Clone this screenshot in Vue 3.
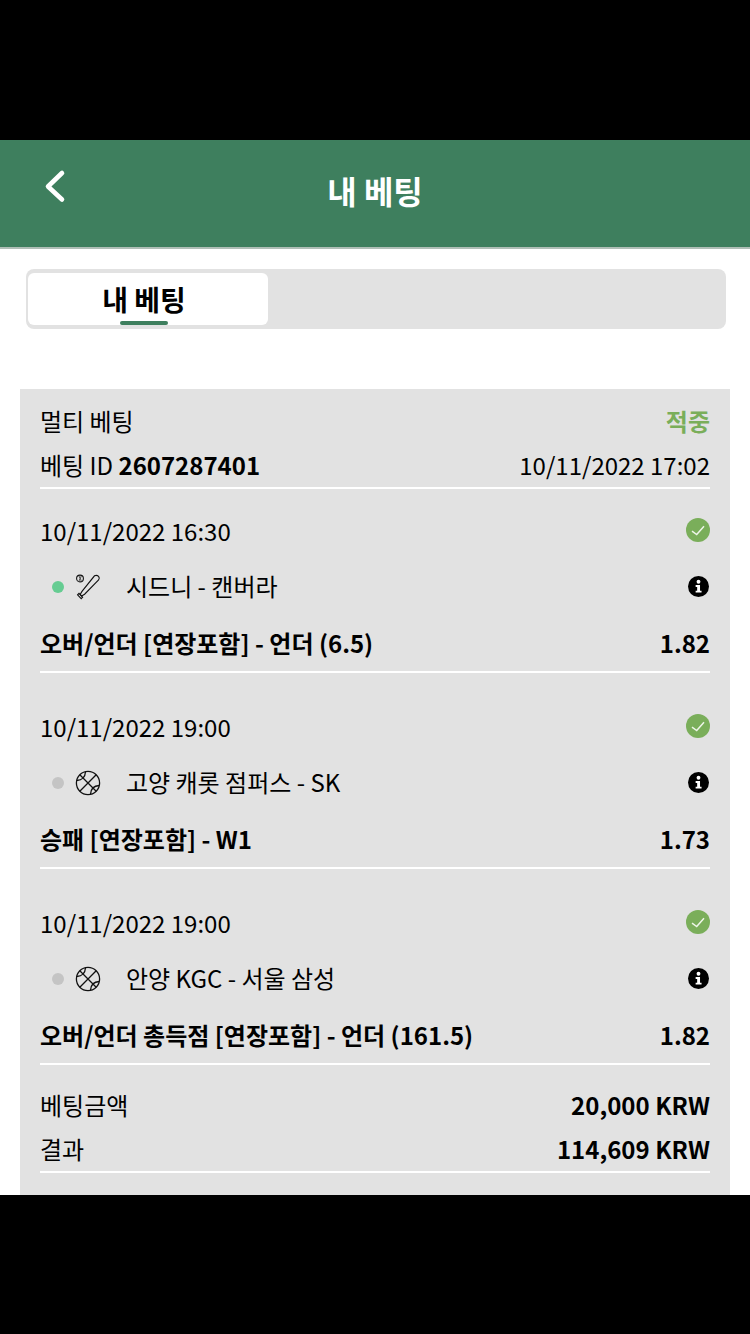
<script setup>
const bets = [
  { date: '10/11/2022 16:30', match: '시드니 - 캔버라', market: '오버/언더 [연장포함] - 언더 (6.5)', odds: '1.82', sport: 'baseball', live: true },
  { date: '10/11/2022 19:00', match: '고양 캐롯 점퍼스 - SK', market: '승패 [연장포함] - W1', odds: '1.73', sport: 'basketball', live: false },
  { date: '10/11/2022 19:00', match: '안양 KGC - 서울 삼성', market: '오버/언더 총득점 [연장포함] - 언더 (161.5)', odds: '1.82', sport: 'basketball', live: false },
]
</script>

<template>
  <div class="screen">
    <div class="band"></div>
    <main class="page">
      <header class="topbar">
        <button class="back" aria-label="뒤로">
          <svg width="28" height="40" viewBox="0 0 28 40" fill="none">
            <path d="M22 6 L8 19.5 L22 32.5" stroke="#fff" stroke-width="4.6" stroke-linecap="round" stroke-linejoin="round" />
          </svg>
        </button>
        <h1>내 베팅</h1>
      </header>

      <div class="tabs">
        <div class="tab">내 베팅<span class="underline"></span></div>
      </div>

      <section class="card">
        <div class="row head-row"><span>멀티 베팅</span><b class="won">적중</b></div>
        <div class="row head-row second"><span>베팅 ID <b>2607287401</b></span><span>10/11/2022 17:02</span></div>

        <div v-for="(bet, i) in bets" :key="i" class="bet">
          <div class="row date-row">
            <span>{{ bet.date }}</span>
            <svg class="check" width="24" height="24" viewBox="0 0 24 24">
              <circle cx="12" cy="12" r="12" fill="#7aae5a" />
              <path d="M6 13.2 L10.7 16.5 L18 8.2" fill="none" stroke="#eef5e8" stroke-width="1.5" />
            </svg>
          </div>
          <div class="row match-row">
            <span class="match">
              <i class="dot" :class="{ live: bet.live }"></i>
              <svg v-if="bet.sport === 'baseball'" class="sport" width="26" height="26" viewBox="0 0 26 26" fill="none" stroke="#111" stroke-width="1.1">
                <circle cx="5" cy="4.5" r="3.4" />
                <path d="M4 2 Q6 4.5 4 7 M6.2 2 Q4.6 4.5 6.2 7" stroke-width="0.7" />
                <path d="M19.5 1.8 Q21.8 0.8 23.6 2.4 Q25 4.2 23.6 6 L9.6 20.2 L6.6 22 L5.2 20.4 L7 17.4 Z" />
                <path d="M2.6 20.8 L6.2 24.6 L7.6 23.2 L4 19.4 Z" />
              </svg>
              <svg v-else class="sport" width="26" height="26" viewBox="0 0 26 26" fill="none" stroke="#111" stroke-width="1.3">
                <circle cx="13" cy="13" r="11.6" />
                <path d="M4.8 4.8 L21.2 21.2 M21.2 4.8 L4.8 21.2" />
                <path d="M1.8 10.5 Q10 10 10.5 1.8 M24.2 15.5 Q16 16 15.5 24.2" />
              </svg>
              <span class="match-name">{{ bet.match }}</span>
            </span>
            <svg class="info" width="21" height="21" viewBox="0 0 22 22">
              <circle cx="11" cy="11" r="11" fill="#000" />
              <circle cx="11" cy="6" r="2" fill="#fff" />
              <path d="M8 9.4 H12.6 V15.4 H14.2 V17.4 H8 V15.4 H9.6 V11.4 H8 Z" fill="#fff" />
            </svg>
          </div>
          <div class="row market-row"><b>{{ bet.market }}</b><b>{{ bet.odds }}</b></div>
        </div>

        <div class="row total first"><span>베팅금액</span><b>20,000 KRW</b></div>
        <div class="row total last"><span>결과</span><b>114,609 KRW</b></div>
      </section>
    </main>
    <div class="band bottom"></div>
  </div>
</template>

<style scoped>
.screen {
  width: 750px;
  height: 1334px;
  overflow: hidden;
  display: flex;
  flex-direction: column;
  background: #000;
  color: #000;
  font-family: "Noto Sans CJK KR", "Noto Sans", sans-serif;
  font-size: 24px;
}
.band { height: 140px; flex: none; background: #000; }
.band.bottom { flex: 1; }
.page {
  height: 1055px;
  flex: none;
  overflow: hidden;
  background: #fff;
}
.topbar {
  height: 107px;
  position: relative;
  display: flex;
  align-items: center;
  justify-content: center;
  background: #3e7f5e;
  border-bottom: 2px solid #b0bfb7;
}
.topbar h1 {
  margin: 0 0 8px;
  color: #fff;
  font-size: 32px;
  font-weight: 700;
  line-height: 44px;
}
.back {
  position: absolute;
  left: 40px;
  top: 27px;
  padding: 0;
  border: 0;
  background: none;
  display: flex;
}
.tabs {
  margin: 20px 24px 0 26px;
  height: 60px;
  box-sizing: border-box;
  padding: 4px 2px;
  background: #e2e2e2;
  border-radius: 8px;
}
.tab {
  position: relative;
  width: 240px;
  height: 52px;
  box-sizing: border-box;
  padding-right: 8px;
  background: #fff;
  border-radius: 6px;
  text-align: center;
  font-size: 28px;
  font-weight: 700;
  line-height: 52px;
}
.underline {
  position: absolute;
  left: 92px;
  bottom: 0;
  width: 48px;
  height: 4px;
  border-radius: 2px;
  background: #3e7f5e;
}
.card {
  margin: 60px 20px 0;
  padding: 9px 20px 0;
  height: 806px;
  box-sizing: border-box;
  background: #e2e2e2;
}
.row {
  display: flex;
  align-items: center;
  justify-content: space-between;
  white-space: nowrap;
}
.row b { font-weight: 700; }
.head-row { height: 44px; }
.head-row.second { padding-bottom: 1px; border-bottom: 2px solid #fff; }
.won { color: #7aae5a; }
.bet {
  height: 184px;
  box-sizing: border-box;
  padding-top: 19px;
  border-bottom: 2px solid #fff;
}
.bet + .bet { margin-top: 12px; }
.date-row { height: 44px; }
.match-row { height: 44px; margin-top: 13px; }
.match { display: flex; align-items: center; }
.dot {
  width: 12px;
  height: 12px;
  margin-left: 12px;
  border-radius: 50%;
  background: #c4c4c4;
}
.dot.live { background: #66cc92; }
.sport { margin-left: 11px; }
.match-name { margin: 0 0 4px 25px; }
.info { margin-right: 1px; margin-bottom: 1px; }
.market-row { height: 44px; margin-top: 11px; }
.total { height: 44px; }
.total.first { margin-top: 17px; }
.total.last { padding-bottom: 1px; border-bottom: 2px solid #fff; }
</style>

<style>
html, body { background: #000; }
</style>
